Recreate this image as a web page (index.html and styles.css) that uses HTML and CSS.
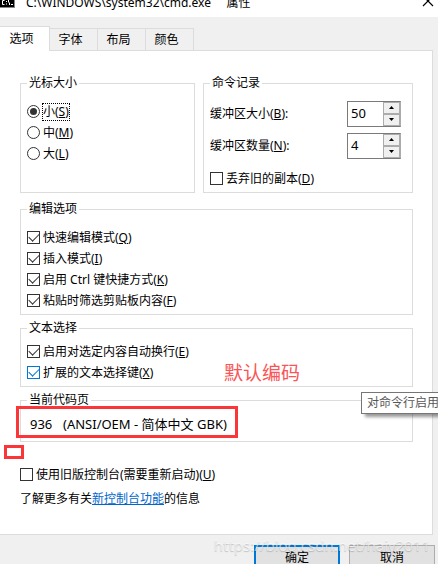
FILE: index.html
```html
<!DOCTYPE html>
<html lang="zh-CN">
  <head>
    <meta charset="UTF-8" />
    <meta name="viewport" content="width=device-width, initial-scale=1.0" />
    <title>cmd.exe 属性</title>
    <link rel="stylesheet" href="styles.css">
  </head>
  <body>
    <header class="title-bar">
      <svg class="title-icon" width="15" height="14" viewBox="0 0 15 14">
        <rect width="15" height="14" fill="#000" />
        <path d="M0 13.5h15M14.5 0v14" stroke="#888" />
        <path d="M4.5 6.5h-2v4h2M6.5 7v1M6.5 9.500v1M8.500 6v2l1 1v2M11 10.500h2" fill="none" stroke="#fff" />
      </svg>
      <h1>C:\WINDOWS\system32\cmd.exe&nbsp;&nbsp;&nbsp;&nbsp; 属性</h1>
      <button class="close" aria-label="关闭">
        <svg width="12" height="12" viewBox="0 0 12 12">
          <path d="M1 1l10 10M11 1L1 11" stroke="#000" stroke-width="1.200" />
        </svg>
      </button>
    </header>

    <nav class="tabs">
      <button class="tab active">选项</button>
      <button class="tab">字体</button>
      <button class="tab">布局</button>
      <button class="tab">颜色</button>
    </nav>

    <main class="panel">
      <div class="columns">
        <fieldset>
          <legend>光标大小</legend>
          <label class="row"><input type="radio" name="cursor" checked /><span class="focused">小(<u>S</u>)</span></label>
          <label class="row"><input type="radio" name="cursor" /><span>中(<u>M</u>)</span></label>
          <label class="row"><input type="radio" name="cursor" /><span>大(<u>L</u>)</span></label>
        </fieldset>

        <fieldset>
          <legend>命令记录</legend>
          <div class="field">
            <label for="buffer-size">缓冲区大小(<u>B</u>):</label>
            <div class="spinner">
              <input type="text" id="buffer-size" value="50" />
              <div class="arrows">
                <button aria-label="增加"><svg width="5" height="3"><path d="M0 3L2.500 0L5 3z" /></svg></button>
                <button aria-label="减少"><svg width="5" height="3"><path d="M0 0L2.500 3L5 0z" /></svg></button>
              </div>
            </div>
          </div>
          <div class="field">
            <label for="buffer-count">缓冲区数量(<u>N</u>):</label>
            <div class="spinner">
              <input type="text" id="buffer-count" value="4" />
              <div class="arrows">
                <button aria-label="增加"><svg width="5" height="3"><path d="M0 3L2.500 0L5 3z" /></svg></button>
                <button aria-label="减少"><svg width="5" height="3"><path d="M0 0L2.500 3L5 0z" /></svg></button>
              </div>
            </div>
          </div>
          <label class="row discard"><input type="checkbox" /><span>丢弃旧的副本(<u>D</u>)</span></label>
        </fieldset>
      </div>

      <fieldset>
        <legend>编辑选项</legend>
        <label class="row"><input type="checkbox" checked /><span>快速编辑模式(<u>Q</u>)</span></label>
        <label class="row"><input type="checkbox" checked /><span>插入模式(<u>I</u>)</span></label>
        <label class="row"><input type="checkbox" checked /><span>启用 Ctrl 键快捷方式(<u>K</u>)</span></label>
        <label class="row"><input type="checkbox" checked /><span>粘贴时筛选剪贴板内容(<u>F</u>)</span></label>
      </fieldset>

      <fieldset class="compact">
        <legend>文本选择</legend>
        <label class="row"><input type="checkbox" checked /><span>启用对选定内容自动换行(<u>E</u>)</span></label>
        <label class="row"><input type="checkbox" class="hot" checked /><span>扩展的文本选择键(<u>X</u>)</span></label>
        <strong class="note">默认编码</strong>
      </fieldset>

      <fieldset class="compact code-page">
        <legend>当前代码页</legend>
        <p><span class="code">936</span>(ANSI/OEM - 简体中文 GBK)</p>
        <span class="mark mark-large"></span>
        <span class="mark mark-small"></span>
        <span class="tooltip" role="tooltip">对命令行启用</span>
      </fieldset>

      <div class="legacy">
        <label class="row"><input type="checkbox" /><span>使用旧版控制台(需要重新启动)(<u>U</u>)</span></label>
        <p>了解更多有关<a href="#">新控制台功能</a>的信息</p>
      </div>
    </main>

    <footer class="actions">
      <button class="primary">确定</button>
      <button>取消</button>
      <span class="watermark">https://blog.csdn.net/haiy2011</span>
    </footer>
  </body>
</html>
```

FILE: styles.css
```css
:root {
  --line: #dcdcdc;
  --face: #f0f0f0;
  --accent: #0078d7;
  --red: #fa3638;
}
* {
  box-sizing: border-box;
}
html {
  height: 100%;
  overflow: hidden;
}
body {
  margin: 0;
  height: 100%;
  overflow: hidden;
  background-color: var(--face);
  color: #000;
  font-family: "Noto Sans", "Noto Sans CJK SC", sans-serif;
  font-size: 12px;
  line-height: 16px;
}

button,
input {
  font: inherit;
  color: inherit;
  margin: 0;
}

u {
  text-underline-offset: 1px;
}

p {
  margin: 0;
}

.title-bar {
  display: flex;
  align-items: flex-end;
  height: 17px;
  padding: 0 4px 6px 0;
  background-color: #fff;
}

.title-bar h1 {
  flex: 1;
  margin: 0 0 0 11px;
  font-size: 12px;
  font-weight: normal;
  white-space: pre;
}

.title-icon {
  margin-bottom: 3px;
}

.close {
  display: flex;
  margin-bottom: 4px;
  padding: 0;
  border: 0;
  background: none;
}

/* tabs */
.tabs {
  display: flex;
  align-items: flex-end;
  padding-top: 9px;
}

.tab {
  width: 48px;
  height: 22px;
  padding: 0 6px 0 0;
  border: 1px solid var(--line);
  border-width: 1px 1px 0 0;
  background-color: var(--face);
}

.tab.active {
  position: relative;
  width: 50px;
  height: 25px;
  margin-bottom: -1px;
  background-color: #fff;
}

.panel {
  height: 485px;
  margin-right: 5px;
  padding: 24px 19px 0 20px;
  border: 1px solid var(--line);
  border-left: 0;
  background-color: #fff;
}

.columns {
  display: grid;
  grid-template-columns: 175fr 210fr;
  gap: 8px;
  margin-bottom: 8px;
}

fieldset {
  position: relative;
  min-width: 0;
  margin: 0 0 5px;
  padding: 10px 6px 3px;
  border: 1px solid var(--line);
}

.columns fieldset {
  margin: 0;
}

fieldset.compact {
  padding-top: 5px;
}

legend {
  padding: 0 2px;
}

.row {
  display: flex;
  align-items: center;
  gap: 3px;
  height: 21px;
}

.row input {
  appearance: none;
  display: grid;
  place-items: center;
  width: 13px;
  height: 13px;
  border: 1px solid #333;
  background-color: #fff;
}

.row input[type="radio"] {
  border-radius: 50%;
}

.row input[type="radio"]:checked::before {
  content: "";
  width: 7px;
  height: 7px;
  border-radius: 50%;
  background-color: #333;
}

.row input[type="checkbox"]:checked::before {
  content: "";
  width: 9px;
  height: 5px;
  margin-bottom: 3px;
  border: solid #333;
  border-width: 0 0 1px 1px;
  transform: rotate(-45deg);
}

.row input.hot,
.row input.hot:checked::before {
  border-color: var(--accent);
}

.focused {
  outline: 1px dotted #000;
}

/* buffer fields */
.field {
  display: flex;
  align-items: center;
  justify-content: space-between;
  height: 25px;
  margin: 0 5px 7px 0;
}

.spinner {
  display: flex;
  width: 54px;
  height: 26px;
  border: 1px solid #7a7a7a;
  border-right-color: #acacac;
}

.spinner input {
  flex: 1;
  min-width: 0;
  padding: 0 3px 2px;
  border: 0;
  font-size: 13px;
}

.arrows {
  display: grid;
  grid-template-rows: 1fr 1fr;
  width: 17px;
  background-color: #acacac;
}

.arrows button {
  display: grid;
  place-items: center;
  min-height: 0;
  padding: 0;
  border: 1px solid #acacac;
  background-color: var(--face);
}

.discard {
  margin-top: 10px;
}

/* red annotations */
.note {
  position: absolute;
  left: 203px;
  top: 25px;
  color: #f95557;
  font-size: 19px;
  font-weight: normal;
  line-height: 24px;
}

.mark {
  position: absolute;
  border: 3px solid var(--red);
}

.mark-large {
  left: -5px;
  top: -2px;
  width: 222px;
  height: 32px;
}

.mark-small {
  left: -17px;
  top: 37px;
  width: 20px;
  height: 14px;
}

.code-page p {
  height: 25px;
  padding: 3px 3px 0;
  font-size: 13px;
}

.code {
  display: inline-block;
  width: 33px;
}

.tooltip {
  position: absolute;
  left: 340px;
  top: -16px;
  width: 90px;
  padding: 2px 5px;
  border: 1px solid #767676;
  background-color: #fff;
  box-shadow: 4px 3px 3px rgba(0, 0, 0, 0.4);
  color: #575757;
  white-space: nowrap;
}

.legacy {
  padding-top: 17px;
}

.legacy p {
  margin-top: 6px;
}

.legacy a {
  color: #0066cc;
}

.actions {
  position: relative;
  display: flex;
  justify-content: flex-end;
  gap: 9px;
  padding: 10px 3px 0 0;
}

.actions button {
  width: 86px;
  height: 26px;
  padding: 0;
  border: 1px solid #adadad;
  background-color: #e1e1e1;
}

.actions .primary {
  border: 2px solid var(--accent);
}

.watermark {
  position: absolute;
  right: 8px;
  top: 0;
  color: rgba(255, 255, 255, 0.6);
  font-size: 15px;
  line-height: 20px;
  text-shadow: 0 1px 1px rgba(0, 0, 0, 0.2);
  pointer-events: none;
}
```
